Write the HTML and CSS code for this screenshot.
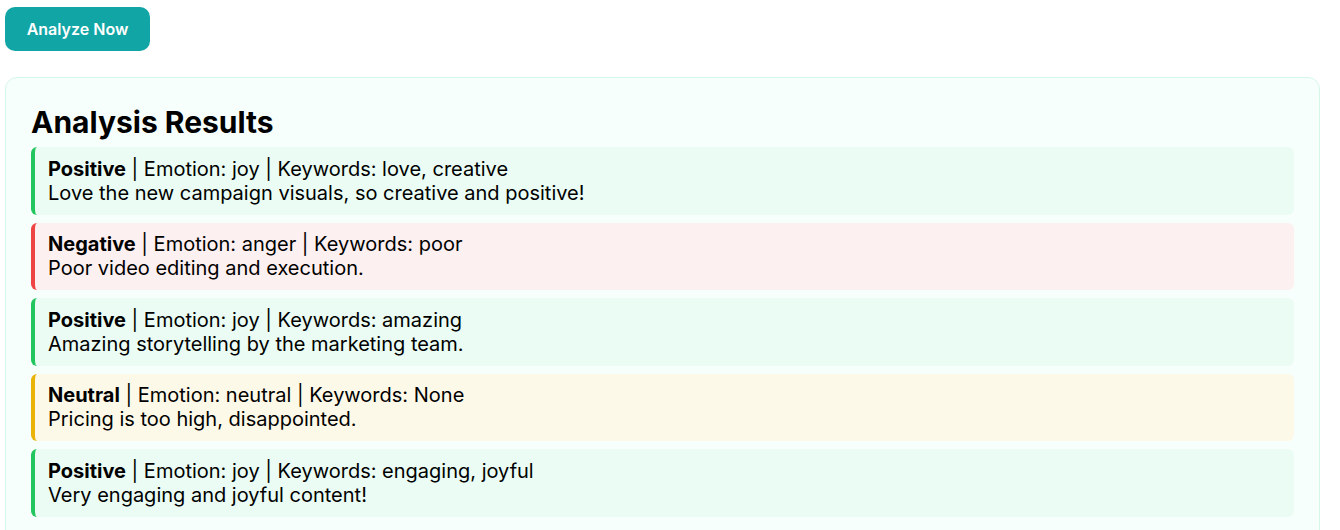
FILE: index.html
```html
<!DOCTYPE html>
<html>
<head>
<meta charset="utf-8">
<link rel="stylesheet" href="styles.css">
</head>
<body>
<button class="analyze-btn">Analyze Now</button>
<section class="results">
  <h2 class="results-title">Analysis Results</h2>
  <div class="item positive">
    <div class="meta"><strong>Positive</strong> | Emotion: joy | Keywords: love, creative</div>
    <div class="text">Love the new campaign visuals, so creative and positive!</div>
  </div>
  <div class="item negative">
    <div class="meta"><strong>Negative</strong> | Emotion: anger | Keywords: poor</div>
    <div class="text">Poor video editing and execution.</div>
  </div>
  <div class="item positive">
    <div class="meta"><strong>Positive</strong> | Emotion: joy | Keywords: amazing</div>
    <div class="text">Amazing storytelling by the marketing team.</div>
  </div>
  <div class="item neutral">
    <div class="meta"><strong>Neutral</strong> | Emotion: neutral | Keywords: None</div>
    <div class="text">Pricing is too high, disappointed.</div>
  </div>
  <div class="item positive">
    <div class="meta"><strong>Positive</strong> | Emotion: joy | Keywords: engaging, joyful</div>
    <div class="text">Very engaging and joyful content!</div>
  </div>
</section>
</body>
</html>
```

FILE: styles.css
```css
html, body {
  background: #ffffff;
}
body {
  margin: 0;
  padding: 7px 20px 0 5px;
  font-family: Inter, "Noto Sans", sans-serif;
  color: #000;
}
.analyze-btn {
  display: block;
  background: #11a5a5;
  color: #fff;
  border: none;
  border-radius: 10px;
  padding: 12px 20px;
  width: 145px;
  height: 44px;
  font-family: Inter, sans-serif;
  font-size: 16px;
  font-weight: 600;
  line-height: 20px;
  cursor: pointer;
}
.results {
  margin-top: 26px;
  background: #f7fffc;
  border: 1px solid #d5f7e8;
  border-radius: 12px;
  padding: 26px 25px 20px;
}
.results-title {
  margin: 0 0 7px;
  font-size: 30px;
  font-weight: 700;
  line-height: 36px;
}
.item {
  border-left: 4px solid;
  border-radius: 6px;
  padding: 9.75px 13px;
  margin-bottom: 8px;
  font-size: 20px;
  line-height: 24px;
}
.item strong {
  font-weight: 700;
}
.positive {
  background: #eafcf3;
  border-left-color: #22c55e;
}
.negative {
  background: #fdf0f0;
  border-left-color: #ef4444;
}
.neutral {
  background: #fdf9e8;
  border-left-color: #eab308;
}
```
